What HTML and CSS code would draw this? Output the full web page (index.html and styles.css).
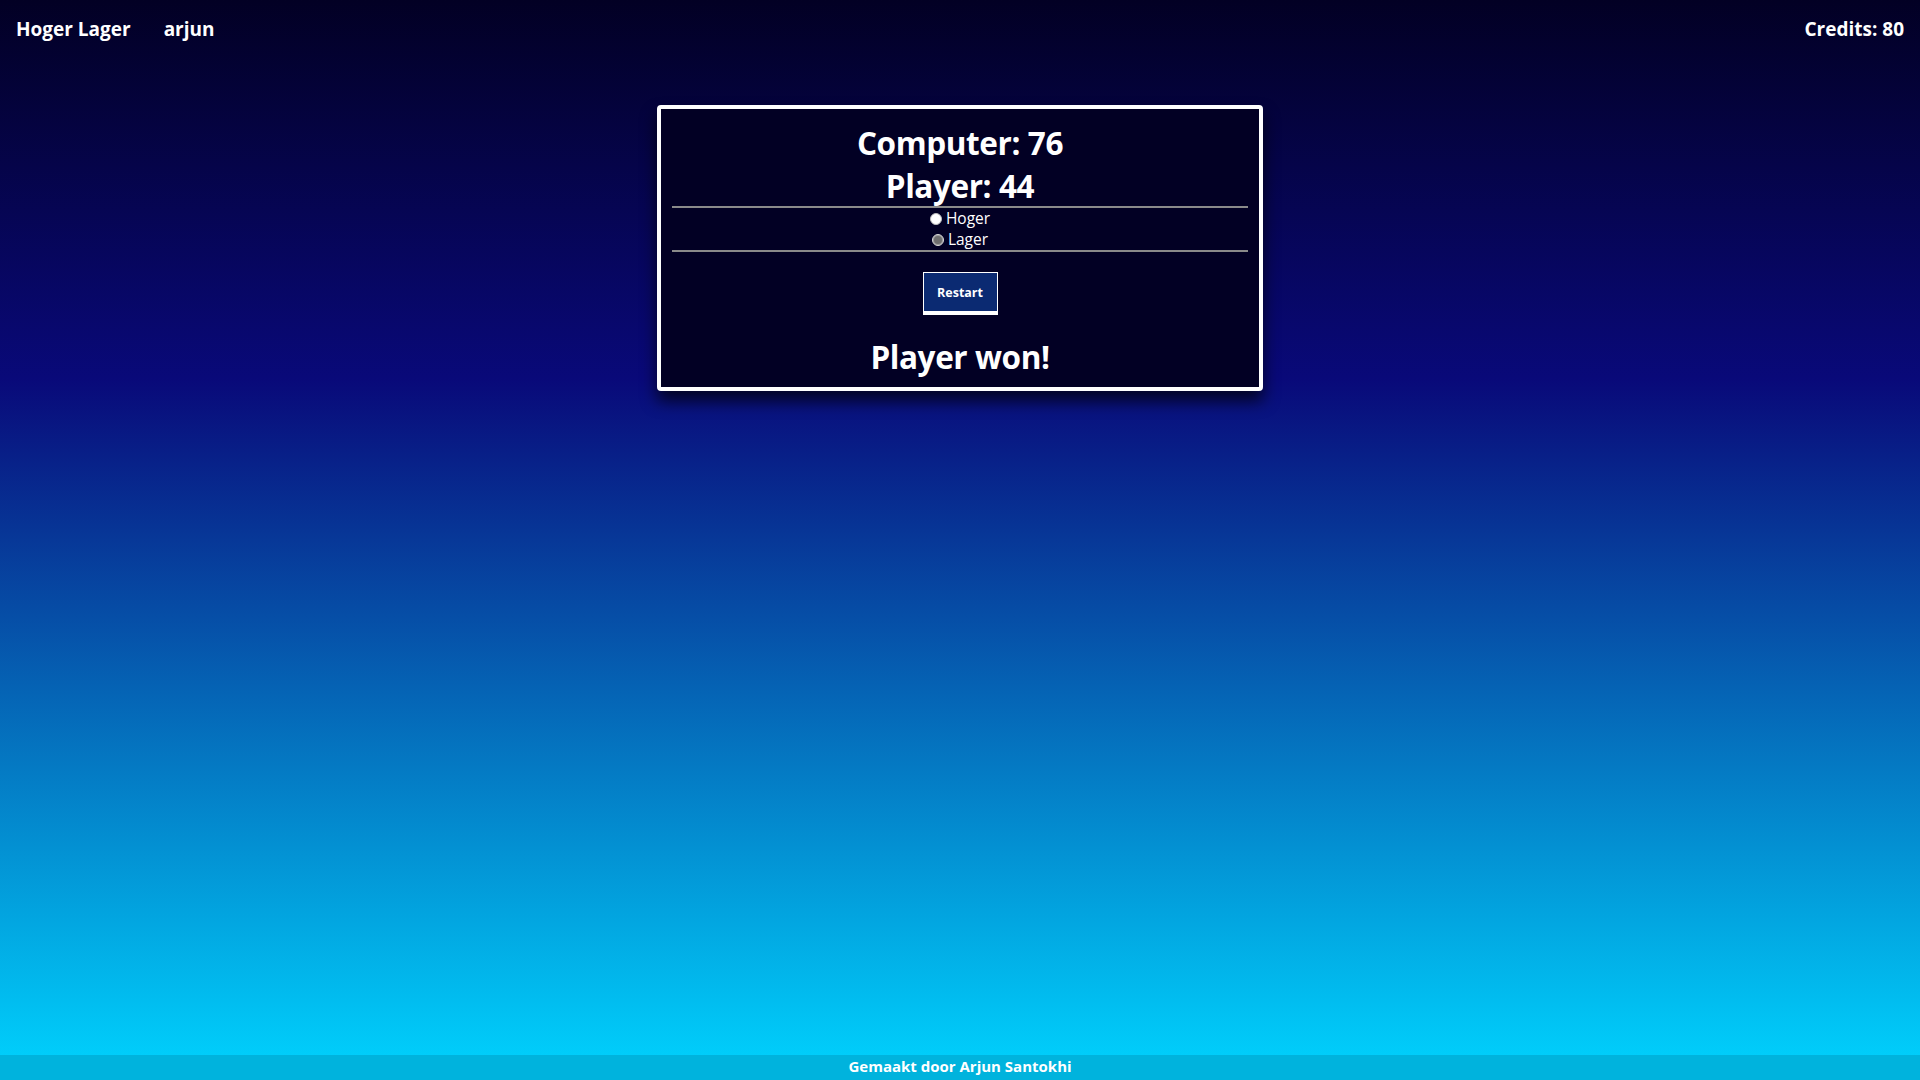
FILE: index.html
```html
<!DOCTYPE html>
<html lang="nl">
<head>
<meta charset="utf-8">
<title>Hoger Lager</title>
<link rel="stylesheet" href="styles.css">
</head>
<body>
<div class="page">
  <header class="topbar">
    <nav class="nav">
      <span class="brand">Hoger Lager</span>
      <span class="user">arjun</span>
    </nav>
    <span class="credits">Credits: 80</span>
  </header>

  <main class="main">
    <section class="card">
      <h1 class="score">Computer: 76</h1>
      <h1 class="score">Player: 44</h1>
      <hr class="rule">
      <div class="choices">
        <label class="choice"><input type="radio" name="keuze" class="radio" disabled> Hoger</label>
        <label class="choice"><input type="radio" name="keuze" class="radio" checked disabled> Lager</label>
      </div>
      <hr class="rule">
      <div class="actions">
        <button class="btn" type="button">Restart</button>
      </div>
      <h1 class="result">Player won!</h1>
    </section>
  </main>

  <footer class="footer">Gemaakt door Arjun Santokhi</footer>
</div>
</body>
</html>
```
FILE: styles.css
```css
html, body {
  margin: 0;
  padding: 0;
}

body {
  font-family: "Open Sans", "Noto Sans", "Liberation Sans", sans-serif;
  color: #ffffff;
  background: linear-gradient(180deg, #020024 0%, #090979 35%, #00d4ff 100%);
  min-height: 100vh;
}

.page {
  min-height: 100vh;
  display: flex;
  flex-direction: column;
}

.topbar {
  height: 57px;
  padding: 0 16px;
  display: flex;
  align-items: center;
  justify-content: space-between;
  font-size: 19px;
  font-weight: 700;
}

.nav {
  display: flex;
  gap: 33px;
}

.main {
  flex: 1;
  display: flex;
  justify-content: center;
  align-items: flex-start;
  padding-top: 48px;
}

.card {
  width: 576px;
  padding: 12px 11px 9px;
  background: #020024;
  border: 4px solid #ffffff;
  border-radius: 4px;
  box-shadow: 0 10px 16px rgba(0, 0, 0, 0.7);
  text-align: center;
}

.score,
.result {
  margin: 0;
  font-size: 31.5px;
  line-height: 43px;
  font-weight: 700;
  letter-spacing: -0.4px;
}

.score:nth-of-type(2) {
  margin-bottom: -1px;
}

.rule {
  margin: 0;
  border: 0;
  height: 2px;
  background: #8a8a8a;
}

.choices {
  display: flex;
  flex-direction: column;
  align-items: center;
}

.choice {
  font-size: 15.5px;
  line-height: 21px;
  display: flex;
  align-items: center;
  gap: 4px;
}

.radio {
  appearance: none;
  -webkit-appearance: none;
  margin: 0;
  width: 12px;
  height: 12px;
  border-radius: 50%;
  background: #ffffff;
  border: 1px solid #bdbdbd;
  box-sizing: border-box;
}

.radio:checked {
  background: #6e6e6e;
  border: 1px solid #dcdcdc;
  box-shadow: inset 0 0 0 1px #9a9a9a;
}

.actions {
  padding: 20px 0;
  display: flex;
  justify-content: center;
}

.btn {
  font-family: inherit;
  font-size: 12.5px;
  font-weight: 700;
  color: #ffffff;
  background: #0b2a72;
  border: 1px solid #ffffff;
  border-bottom: 4px solid #ffffff;
  width: 75px;
  height: 43px;
  padding: 0;
  cursor: pointer;
}

.footer {
  height: 25px;
  line-height: 23px;
  background: #00b3dd;
  text-align: center;
  font-size: 15px;
  font-weight: 700;
}
```
